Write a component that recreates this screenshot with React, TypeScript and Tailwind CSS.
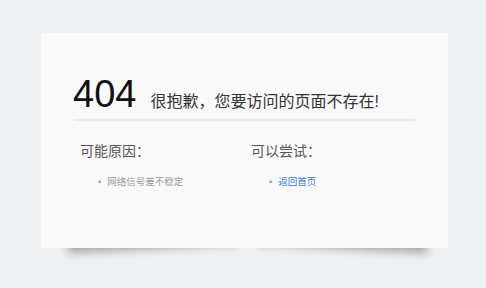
export default function App() {
  const cjk = { fontFamily: '"Liberation Sans", "Noto Sans CJK SC", sans-serif' };

  return (
    <div className="min-h-screen bg-[#eff0f2] pl-[41px] pt-[33px]" style={cjk}>
      <div className="relative z-0 w-[407px]">
        {/* lifted corner shadows */}
        <div className="absolute -z-10 left-[26px] bottom-[8px] w-[170px] h-[20px] bg-[#999] -rotate-3 shadow-[0_9px_9px_rgba(0,0,0,0.3)]" />
        <div className="absolute -z-10 right-[20px] bottom-[8px] w-[170px] h-[20px] bg-[#999] rotate-3 shadow-[0_9px_9px_rgba(0,0,0,0.3)]" />

        <div className="h-[215px] bg-[#f9f9f9] pl-[32px] pr-[33px] pt-[42px]">
          <div className="flex items-baseline">
            <span className="text-[38px] leading-none text-[#111]">404</span>
            <span className="ml-[14px] text-[16px] leading-none text-[#333]">很抱歉，您要访问的页面不存在!</span>
          </div>
          <div className="ml-[1px] mt-[6px] h-[2px] bg-[#ebebeb]" />

          <div className="mt-[20px] flex pl-[7px]">
            <div className="w-[171px]">
              <h3 className="text-[14px] leading-[20px] text-[#555]">可能原因：</h3>
              <ul className="mt-[14px] pl-[18px]">
                <li className="flex items-center gap-[6px] text-[9.5px] leading-[14px] text-[#999]">
                  <span className="text-[#999]">•</span>
                  网络信号差不稳定
                </li>
              </ul>
            </div>
            <div>
              <h3 className="text-[14px] leading-[20px] text-[#555]">可以尝试：</h3>
              <ul className="mt-[14px] pl-[18px]">
                <li className="flex items-center gap-[6px] text-[9.5px] leading-[14px] text-[#999]">
                  <span>•</span>
                  <a href="#" className="text-[#3b82c9]">返回首页</a>
                </li>
              </ul>
            </div>
          </div>
        </div>
      </div>
    </div>
  );
}
